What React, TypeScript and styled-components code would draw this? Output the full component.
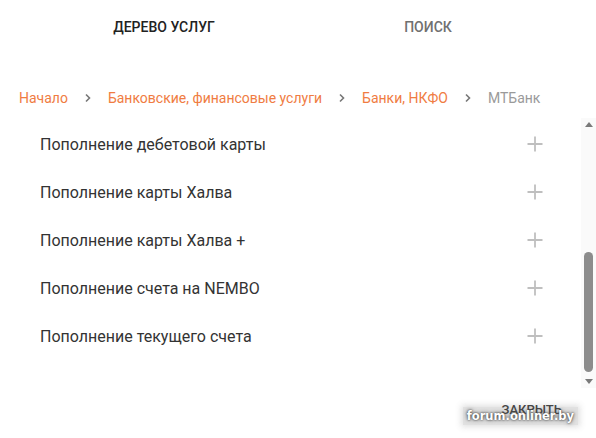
import React, { FC } from 'react';
import styled, { createGlobalStyle } from 'styled-components';

const GlobalStyle = createGlobalStyle`
	html, body {
		margin: 0;
		padding: 0;
		background: #ffffff;
	}
	body {
		font-family: Roboto, 'Liberation Sans', Arial, sans-serif;
	}
`;

const crumbs = ['Начало', 'Банковские, финансовые услуги', 'Банки, НКФО'];
const items = [
	'Пополнение дебетовой карты',
	'Пополнение карты Халва',
	'Пополнение карты Халва +',
	'Пополнение счета на NEMBO',
	'Пополнение текущего счета',
];

const Chevron: FC = () => (
	<svg width='8' height='10' viewBox='0 0 8 10'>
		<path d='M2 1.5 L5.5 5 L2 8.5' fill='none' stroke='#777' strokeWidth='1.6' />
	</svg>
);

const Plus: FC = () => (
	<svg width='16' height='16' viewBox='0 0 16 16'>
		<path d='M8 0.5 V15.5 M0.5 8 H15.5' stroke='#bfbfbf' strokeWidth='1.8' />
	</svg>
);

const App: FC = () => {
	return (
		<Page>
			<GlobalStyle />
			<Tabs>
				<Tab $active>Дерево услуг</Tab>
				<Tab>Поиск</Tab>
			</Tabs>
			<Crumbs>
				{crumbs.map((c) => (
					<React.Fragment key={c}>
						<CrumbLink>{c}</CrumbLink>
						<Chevron />
					</React.Fragment>
				))}
				<CrumbCurrent>МТБанк</CrumbCurrent>
			</Crumbs>
			<ListArea>
				<List>
					{items.map((t) => (
						<Row key={t}>
							<RowTitle>{t}</RowTitle>
							<Plus />
						</Row>
					))}
				</List>
				<Scrollbar>
					<Arrow $up />
					<Track>
						<Thumb />
					</Track>
					<Arrow />
				</Scrollbar>
			</ListArea>
			<Footer>
				<CloseBtn>Закрыть</CloseBtn>
				<Watermark>forum.onliner.by</Watermark>
			</Footer>
		</Page>
	);
};

const Page = styled.div`
	width: 596px;
	height: 438px;
	overflow: hidden;
	display: flex;
	flex-direction: column;
	background: #fff;
`;
const Tabs = styled.div`
	display: grid;
	grid-template-columns: 264px 264px;
	padding: 18px 0 0 32px;
	height: 39px;
`;
const Tab = styled.div<{ $active?: boolean }>`
	text-align: center;
	text-transform: uppercase;
	font-size: 14px;
	font-weight: 500;
	line-height: 18px;
	color: ${(p) => (p.$active ? '#222' : '#707070')};
`;
const Crumbs = styled.div`
	display: flex;
	align-items: center;
	gap: 16px;
	padding: 21px 0 0 19px;
	height: 40px;
	font-size: 14px;
	line-height: 18px;
`;
const CrumbLink = styled.span`
	color: #f07c42;
`;
const CrumbCurrent = styled.span`
	color: #9a9a9a;
`;
const ListArea = styled.div`
	display: flex;
	height: 270px;
`;
const List = styled.div`
	flex: 1;
	padding: 2px 0 0 40px;
`;
const Row = styled.div`
	display: flex;
	align-items: center;
	justify-content: space-between;
	height: 48px;
	padding-right: 38px;
`;
const RowTitle = styled.span`
	font-size: 16px;
	color: #333;
`;
const Scrollbar = styled.div`
	width: 15px;
	display: flex;
	flex-direction: column;
	align-items: center;
	background: #fafafa;
	padding: 0 0 4px;
`;
const Arrow = styled.div<{ $up?: boolean }>`
	width: 0;
	height: 0;
	margin-top: 4px;
	border-left: 4px solid transparent;
	border-right: 4px solid transparent;
	${(p) => (p.$up ? 'border-bottom: 5px solid #7a7a7a;' : 'border-top: 5px solid #7a7a7a;')}
`;
const Track = styled.div`
	flex: 1;
	width: 100%;
	display: flex;
	flex-direction: column;
	justify-content: flex-end;
	align-items: center;
	padding: 4px 0 3px;
`;
const Thumb = styled.div`
	width: 9px;
	height: 120px;
	border-radius: 5px;
	background: #8c8c8c;
`;
const Footer = styled.div`
	position: relative;
	display: flex;
	justify-content: flex-end;
	padding: 14px 34px 0 0;
`;
const CloseBtn = styled.div`
	text-transform: uppercase;
	font-size: 13px;
	font-weight: 500;
	color: #444;
`;
const Watermark = styled.div`
	position: absolute;
	right: 18px;
	top: 19px;
	padding: 2px 4px;
	background: rgba(90, 90, 90, 0.18);
	box-shadow: 0 0 6px 2px rgba(90, 90, 90, 0.18);
	font-family: 'DejaVu Sans', 'Liberation Sans', sans-serif;
	font-weight: bold;
	font-size: 11.5px;
	line-height: 14px;
	color: #fff;
	text-shadow: 0 0 2px #333, 0 0 4px #555;
`;

export default App;
